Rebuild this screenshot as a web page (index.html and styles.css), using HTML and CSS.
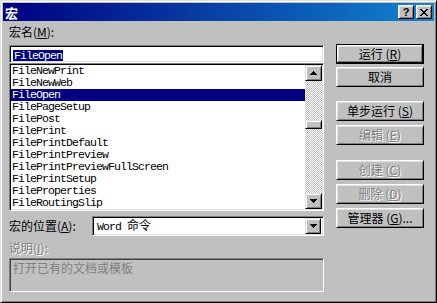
FILE: index.html
```html
<!DOCTYPE html>
<html>
<head>
<meta charset="utf-8">
<link rel="stylesheet" href="styles.css">
</head>
<body>
<div class="window">
  <div class="titlebar">
    <span class="title">宏</span>
    <div class="tbtns">
      <div class="tbtn q">?</div>
      <div class="tbtn x"><svg width="8" height="7" viewBox="0 0 8 7"><path d="M0 0h2v1h1v1h2V1h1V0h2v1H7v1H6v1H5v1h1v1h1v1h1v1H6V6H5V5H3v1H2v1H0V6h1V5h1V4h1V3H2V2H1V1H0z"/></svg></div>
    </div>
  </div>
  <div class="content">
    <div class="leftcol">
      <div class="label lbl-name">宏名(<u>M</u>):</div>
      <div class="field sunken"><span class="sel mono">FileOpen</span></div>
      <div class="list sunken">
        <ul class="items mono">
          <li>FileNewPrint</li>
          <li>FileNewWeb</li>
          <li class="active">FileOpen</li>
          <li>FilePageSetup</li>
          <li>FilePost</li>
          <li>FilePrint</li>
          <li>FilePrintDefault</li>
          <li>FilePrintPreview</li>
          <li>FilePrintPreviewFullScreen</li>
          <li>FilePrintSetup</li>
          <li>FileProperties</li>
          <li>FileRoutingSlip</li>
        </ul>
        <div class="vscroll">
          <div class="sbtn raised2"><svg width="7" height="4" viewBox="0 0 7 4"><path d="M3 0h1v1h1v1h1v1h1v1H0V3h1V2h1V1h1z"/></svg></div>
          <div class="track"><div class="thumb raised2"></div></div>
          <div class="sbtn raised2"><svg width="7" height="4" viewBox="0 0 7 4"><path d="M0 0h7v1H6v1H5v1H4v1H3V3H2V2H1V1H0z"/></svg></div>
        </div>
      </div>
      <div class="locrow">
        <div class="label">宏的位置(<u>A</u>):</div>
        <div class="combo sunken">
          <span class="combotext"><span class="mono">Word </span>命令</span>
          <div class="cbtn raised2"><svg width="7" height="4" viewBox="0 0 7 4"><path d="M0 0h7v1H6v1H5v1H4v1H3V3H2V2H1V1H0z"/></svg></div>
        </div>
      </div>
      <div class="label disabled lbl-desc">说明(<u>I</u>):</div>
      <div class="desc">打开已有的文档或模板</div>
    </div>
    <div class="rightcol">
      <div class="btn default b-run">运行 (<u>R</u>)</div>
      <div class="btn b-cancel">取消</div>
      <div class="btn b-step">单步运行 (<u>S</u>)</div>
      <div class="btn disabled b-edit">编辑 (<u>E</u>)</div>
      <div class="btn disabled b-create">创建 (<u>C</u>)</div>
      <div class="btn disabled b-del">删除 (<u>D</u>)</div>
      <div class="btn b-org">管理器 (<u>G</u>)...</div>
    </div>
  </div>
</div>
</body>
</html>
```
FILE: styles.css
```css
* { box-sizing: border-box; }
body {
  margin: 0;
  background: #c0c0c0;
  font-family: "Noto Sans CJK SC", "Liberation Sans", sans-serif;
  font-size: 12px;
  color: #000;
}
.window {
  width: 437px;
  height: 303px;
  background: #c0c0c0;
  border: 1px solid;
  border-color: #dfdfdf #000 #000 #dfdfdf;
  box-shadow: inset 1px 1px #fff, inset -1px -1px #808080;
  padding: 2px;
}
.titlebar {
  height: 18px;
  display: flex;
  align-items: center;
  justify-content: space-between;
  padding-left: 2px;
  background: linear-gradient(to right, #000080, #1084d0);
}
.title {
  color: #fff;
  font-weight: bold;
  font-size: 13px;
  line-height: 15px;
}
.tbtns { display: flex; gap: 2px; margin-right: 2px; }
.tbtn {
  width: 16px;
  height: 14px;
  background: #c0c0c0;
  border: 1px solid;
  border-color: #fff #000 #000 #fff;
  box-shadow: inset 1px 1px #dfdfdf, inset -1px -1px #808080;
  display: flex;
  align-items: center;
  justify-content: center;
}
.tbtn.q {
  font-family: "Liberation Sans", sans-serif;
  font-weight: bold;
  font-size: 11px;
  line-height: 12px;
}
.tbtn svg { display: block; }
.content {
  display: flex;
  gap: 12px;
  padding: 4px 10px 0 6px;
}
.leftcol { width: 315px; display: flex; flex-direction: column; }
.rightcol { width: 88px; display: flex; flex-direction: column; }
.label { line-height: 14px; height: 14px; white-space: nowrap; }
.lbl-name { margin-bottom: 6px; }
.mono {
  font-family: "Liberation Mono", monospace;
  font-size: 11.5px;
  letter-spacing: -0.9px;
}
.sunken {
  border: 1px solid;
  border-color: #808080 #fff #fff #808080;
  box-shadow: inset 1px 1px #000, inset -1px -1px #dfdfdf;
  background: #fff;
}
.raised2 {
  background: #c0c0c0;
  border: 1px solid;
  border-color: #dfdfdf #000 #000 #dfdfdf;
  box-shadow: inset 1px 1px #fff, inset -1px -1px #808080;
}
.field {
  height: 18px;
  padding: 2px 2px 0 3px;
  display: flex;
  align-items: center;
}
.sel {
  background: #000080;
  color: #fff;
  line-height: 11px;
  height: 11px;
  padding: 0 1px 0 1px;
}
.list {
  height: 148px;
  display: flex;
  padding: 1px;
}
.items {
  list-style: none;
  margin: 0;
  padding: 0;
  flex: 1;
  overflow: hidden;
}
.items li {
  height: 12px;
  line-height: 12px;
  padding-left: 1px;
  white-space: nowrap;
}
.items li.active { background: #000080; color: #fff; }
.vscroll {
  width: 17px;
  display: flex;
  flex-direction: column;
}
.sbtn {
  height: 16px;
  display: flex;
  align-items: center;
  justify-content: center;
}
.sbtn svg, .cbtn svg { display: block; }
.track {
  flex: 1;
  background: conic-gradient(#c0c0c0 25%, #fff 0 50%, #c0c0c0 0 75%, #fff 0) 0 0 / 2px 2px;
}
.thumb { height: 9px; margin-top: 39px; }
.locrow {
  margin-top: 5px;
  height: 20px;
  display: flex;
  align-items: center;
}
.locrow .label { width: 83px; }
.combo {
  flex: 1;
  height: 20px;
  display: flex;
  align-items: center;
  justify-content: space-between;
  padding: 2px;
}
.combotext { padding-left: 2px; line-height: 14px; }
.cbtn {
  width: 16px;
  height: 16px;
  display: flex;
  align-items: center;
  justify-content: center;
}
.disabled { color: #808080; text-shadow: 1px 1px 0 #fff; }
.lbl-desc { margin-top: 5px; }
.desc {
  margin-top: 3px;
  height: 34px;
  border: 1px solid;
  border-color: #808080 #fff #fff #808080;
  box-shadow: inset 1px 1px #404040;
  color: #808080;
  padding: 2px 0 0 3px;
  line-height: 14px;
}
.btn {
  height: 20px;
  border: 1px solid;
  border-color: #fff #000 #000 #fff;
  box-shadow: inset 1px 1px #dfdfdf, inset -1px -1px #808080;
  display: flex;
  align-items: center;
  justify-content: center;
  line-height: 14px;
  white-space: nowrap;
}
.btn.default {
  border-color: #000;
  box-shadow: inset -1px -1px #000, inset 1px 1px #fff, inset -2px -2px #808080, inset 2px 2px #dfdfdf;
}
.b-run { margin-top: 19px; }
.b-cancel { margin-top: 3px; }
.b-step { margin-top: 14px; }
.b-edit { margin-top: 4px; }
.b-create { margin-top: 15px; }
.b-del { margin-top: 4px; }
.b-org { margin-top: 4px; }
```
